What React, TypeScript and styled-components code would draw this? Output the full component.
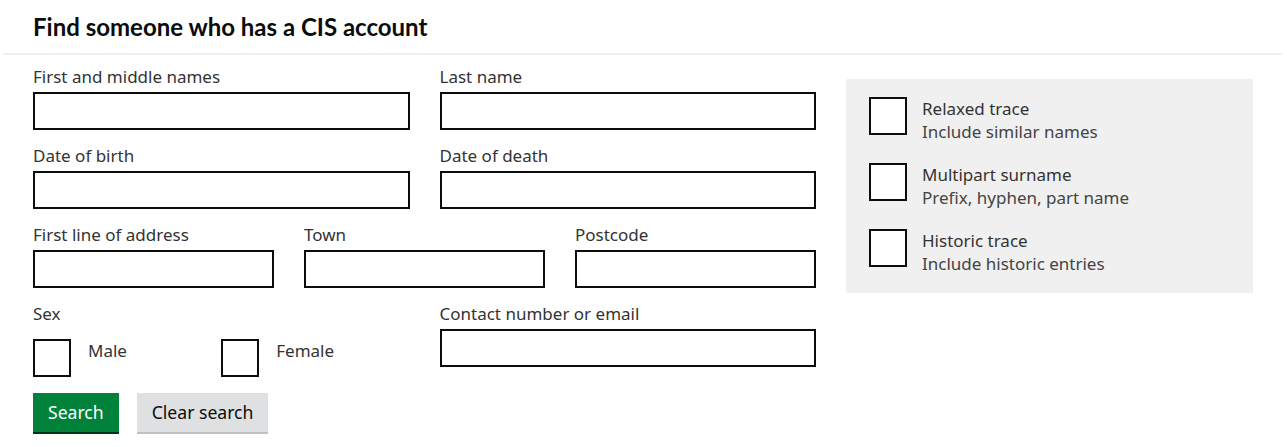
import * as React from "react";
import styled, { createGlobalStyle } from "styled-components";

const GlobalStyle = createGlobalStyle`
  html, body {
    margin: 0;
    padding: 0;
    background: #ffffff;
  }
  body {
    font-family: "Noto Sans", "Liberation Sans", sans-serif;
    color: #0b0c0c;
  }
  * {
    box-sizing: border-box;
  }
`;

type FieldSpec = { label: string };

const rows: FieldSpec[][] = [
  [{ label: "First and middle names" }, { label: "Last name" }],
  [{ label: "Date of birth" }, { label: "Date of death" }],
  [{ label: "First line of address" }, { label: "Town" }, { label: "Postcode" }],
];

const traces = [
  { title: "Relaxed trace", hint: "Include similar names" },
  { title: "Multipart surname", hint: "Prefix, hyphen, part name" },
  { title: "Historic trace", hint: "Include historic entries" },
];

export default function App() {
  return (
    <Page>
      <GlobalStyle />
      <Header>
        <Title>Find someone who has a CIS account</Title>
      </Header>
      <Divider />
      <Main>
        <Form>
          {rows.map((row, i) => (
            <Row key={i} columns={row.length}>
              {row.map((field) => (
                <Field key={field.label}>
                  <Label>{field.label}</Label>
                  <Input type="text" />
                </Field>
              ))}
            </Row>
          ))}
          <Row columns={2}>
            <Field>
              <Label>Sex</Label>
              <SexOptions>
                <Option>
                  <Box />
                  <OptionText>Male</OptionText>
                </Option>
                <Option>
                  <Box />
                  <OptionText>Female</OptionText>
                </Option>
              </SexOptions>
            </Field>
            <Field>
              <Label>Contact number or email</Label>
              <Input type="text" />
            </Field>
          </Row>
          <Actions>
            <Button primary>Search</Button>
            <Button>Clear search</Button>
          </Actions>
        </Form>
        <Panel>
          {traces.map((t) => (
            <TraceItem key={t.title}>
              <Box />
              <TraceText>
                <TraceTitle>{t.title}</TraceTitle>
                <TraceHint>{t.hint}</TraceHint>
              </TraceText>
            </TraceItem>
          ))}
        </Panel>
      </Main>
    </Page>
  );
}

/**
 * Styled Components
 */

const Page = styled.div`
  width: 1287px;
  min-height: 447px;
`;

const Header = styled.header`
  padding: 12px 33px 0;
  height: 53px;
`;

const Title = styled.h1`
  margin: 0;
  font-family: "Lato", "Liberation Sans", sans-serif;
  font-size: 24px;
  line-height: 30px;
  font-weight: 700;
  color: #0b0c0c;
`;

const Divider = styled.hr`
  margin: 0 5px 0 3px;
  height: 2px;
  border: 0;
  background: #f0f0f0;
`;

const Main = styled.main`
  display: flex;
  gap: 30px;
  padding: 0 33px;
`;

const Form = styled.form`
  width: 783px;
  padding-top: 12px;
  display: flex;
  flex-direction: column;
  gap: 16px;
`;

type RowProps = { columns: number };

const Row = styled.div<RowProps>`
  display: grid;
  grid-template-columns: repeat(${(p) => p.columns}, 1fr);
  column-gap: 30px;
`;

const Field = styled.div`
  display: flex;
  flex-direction: column;
`;

const Label = styled.label`
  font-size: 17px;
  line-height: 20px;
  color: #333333;
  margin-bottom: 5px;
`;

const Input = styled.input`
  height: 38px;
  width: 100%;
  border: 2px solid #0b0c0c;
  border-radius: 0;
  padding: 5px;
  font: inherit;
  background: #fff;
`;

const SexOptions = styled.div`
  display: grid;
  grid-template-columns: 1fr 1fr;
  margin-top: 10px;
`;

const Option = styled.div`
  display: flex;
  align-items: flex-start;
  gap: 17px;
`;

const Box = styled.span`
  flex: 0 0 38px;
  width: 38px;
  height: 38px;
  border: 2px solid #0b0c0c;
  background: #fff;
`;

const OptionText = styled.span`
  font-size: 17px;
  line-height: 24px;
  color: #333333;
  padding-top: 0;
`;

const Actions = styled.div`
  display: flex;
  gap: 18px;
`;

type ButtonProps = { primary?: boolean };

const Button = styled.button<ButtonProps>`
  height: 39px;
  padding: 0 15px;
  border: 0;
  border-radius: 0;
  font-family: inherit;
  font-size: 17.6px;
  line-height: 39px;
  background: ${(p) => (p.primary ? "#00823b" : "#dee0e2")};
  color: ${(p) => (p.primary ? "#ffffff" : "#0b0c0c")};
  box-shadow: 0 2px 0 ${(p) => (p.primary ? "#003618" : "#bfc1c3")};
  cursor: pointer;
`;

const Panel = styled.aside`
  margin-top: 24px;
  width: 407px;
  height: 214px;
  background: #f0f0f0;
  padding: 18px 23px 17px;
  display: flex;
  flex-direction: column;
  gap: 20px;
`;

const TraceItem = styled.div`
  display: flex;
  gap: 15px;
  align-items: flex-start;
`;

const TraceText = styled.div`
  display: flex;
  flex-direction: column;
`;

const TraceTitle = styled.span`
  font-size: 17px;
  line-height: 23px;
  color: #333333;
`;

const TraceHint = styled.span`
  font-size: 17px;
  line-height: 23px;
  color: #444444;
`;
